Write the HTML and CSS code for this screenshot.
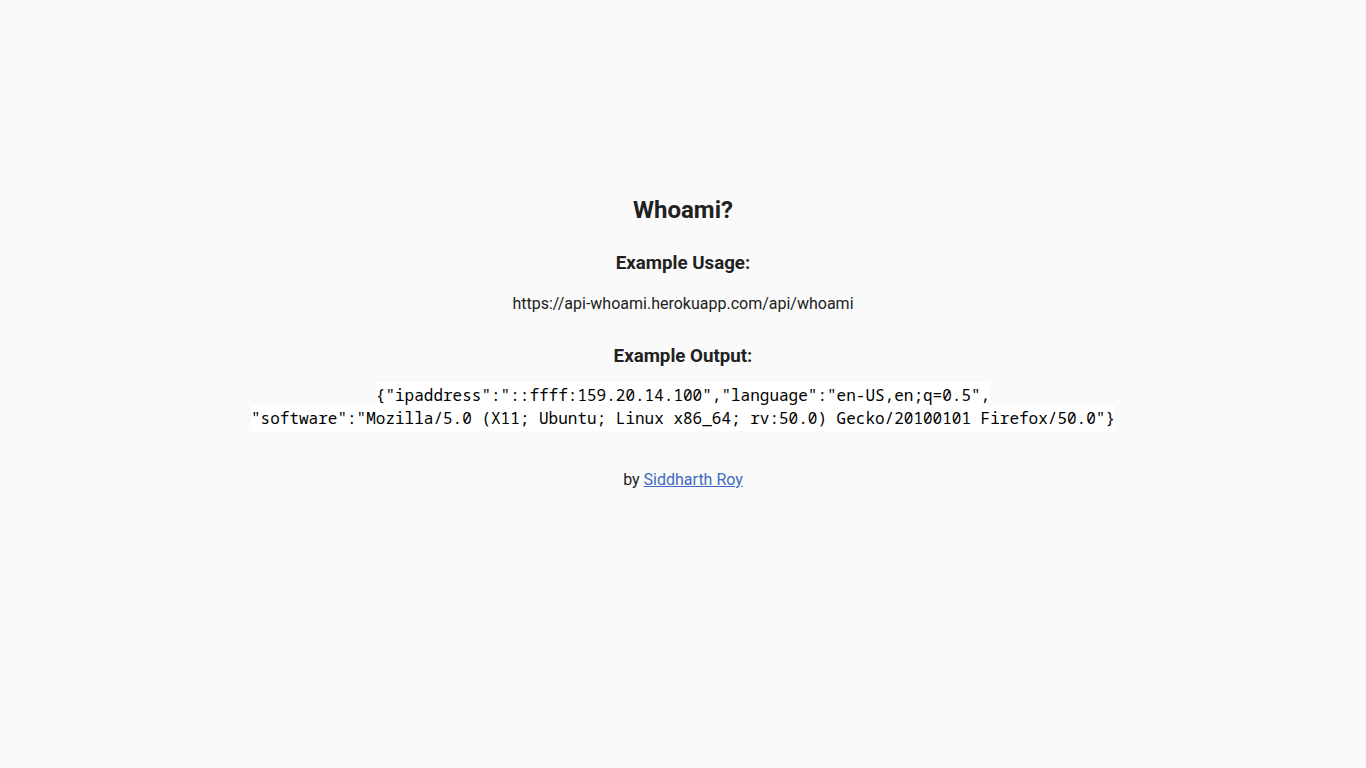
FILE: index.html
```html
<!DOCTYPE html>
<html lang="en">
<head>
<meta charset="utf-8">
<title>Whoami?</title>
<link rel="stylesheet" href="styles.css">
</head>
<body>
<main class="page">
  <h1 class="title">Whoami?</h1>
  <h3 class="label label-usage">Example Usage:</h3>
  <p class="url">https://api-whoami.herokuapp.com/api/whoami</p>
  <h3 class="label label-output">Example Output:</h3>
  <p class="output"><code class="json">{"ipaddress":"::ffff:159.20.14.100","language":"en-US,en;q=0.5",<br>"software":"Mozilla/5.0 (X11; Ubuntu; Linux x86_64; rv:50.0) Gecko/20100101 Firefox/50.0"}</code></p>
  <p class="credit">by <a class="author" href="#">Siddharth Roy</a></p>
</main>
</body>
</html>
```
FILE: styles.css
```css
html, body {
  margin: 0;
  padding: 0;
  background: #fafafa;
}

body {
  font-family: Roboto, "Liberation Sans", Arial, sans-serif;
  color: #212121;
  font-size: 16px;
}

.page {
  display: flex;
  flex-direction: column;
  align-items: center;
  text-align: center;
  padding-top: 194px;
}

.title {
  margin: 0;
  font-size: 24px;
  line-height: 32px;
  font-weight: 700;
}

.label {
  margin: 0;
  font-size: 18.72px;
  line-height: 24px;
  font-weight: 700;
}

.label-usage {
  margin-top: 25px;
}

.url {
  margin: 17px 0 0;
  line-height: 24px;
}

.label-output {
  margin-top: 28px;
}

.output {
  margin: 16px 0 0;
  line-height: 22px;
}

.json {
  font-family: "Noto Sans Mono", "Liberation Mono", monospace;
  font-size: 16px;
  background: #ffffff;
  color: #000;
  padding: 2px 0;
}

.credit {
  margin: 38px 0 0;
  line-height: 24px;
}

.author {
  color: #3d6bc0;
}
```
